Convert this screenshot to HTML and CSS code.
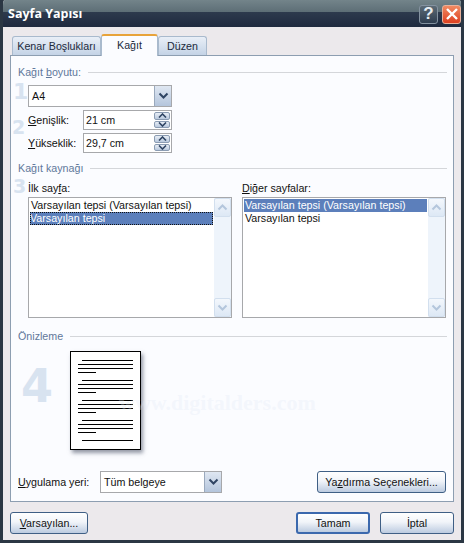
FILE: index.html
```html
<!DOCTYPE html>
<html lang="tr">
<head>
    <title>Sayfa Yapısı</title>
    <link rel="stylesheet" href="styles.css">
</head>
<body>
    <div class="window">
        <div class="titlebar">
            <span class="title">Sayfa Yapısı</span>
            <div class="title-buttons">
                <span class="help-button">?</span>
                <span class="close-button">
                    <svg width="14" height="14" viewBox="0 0 14 14"><path d="M2 2L12 12M12 2L2 12" stroke="#fff" stroke-width="2.4" fill="none"/></svg>
                </span>
            </div>
        </div>

        <div class="content">
            <div class="tabs">
                <span class="tab">Kenar Boşlukları</span>
                <span class="tab active">Kağıt</span>
                <span class="tab">Düzen</span>
            </div>

            <div class="panel">
                <span class="big-number n1">1</span>
                <span class="big-number n2">2</span>
                <span class="big-number n3">3</span>
                <span class="big-number n4">4</span>
                <span class="watermark">www.digitalders.com</span>

                <div class="group-head"><span>Kağıt <u>b</u>oyutu:</span></div>
                <div class="combo paper-combo">
                    <span class="combo-value">A4</span>
                    <span class="combo-arrow">
                        <svg width="11" height="8" viewBox="0 0 11 8"><path d="M1.5 1.5L5.5 5.5L9.5 1.5" stroke="#2f4463" stroke-width="2" fill="none"/></svg>
                    </span>
                </div>
                <div class="size-row first">
                    <label class="size-label"><u>G</u>enişlik:</label>
                    <div class="spin-input">
                        <span class="spin-value">21 cm</span>
                        <span class="spin">
                            <span class="spin-btn"><svg width="9" height="5" viewBox="0 0 9 5"><path d="M1 4.5L4.5 1L8 4.5" stroke="#2f4463" stroke-width="1.6" fill="none"/></svg></span>
                            <span class="spin-btn"><svg width="9" height="5" viewBox="0 0 9 5"><path d="M1 .5L4.5 4L8 .5" stroke="#2f4463" stroke-width="1.6" fill="none"/></svg></span>
                        </span>
                    </div>
                </div>
                <div class="size-row">
                    <label class="size-label"><u>Y</u>ükseklik:</label>
                    <div class="spin-input">
                        <span class="spin-value">29,7 cm</span>
                        <span class="spin">
                            <span class="spin-btn"><svg width="9" height="5" viewBox="0 0 9 5"><path d="M1 4.5L4.5 1L8 4.5" stroke="#2f4463" stroke-width="1.6" fill="none"/></svg></span>
                            <span class="spin-btn"><svg width="9" height="5" viewBox="0 0 9 5"><path d="M1 .5L4.5 4L8 .5" stroke="#2f4463" stroke-width="1.6" fill="none"/></svg></span>
                        </span>
                    </div>
                </div>

                <div class="group-head source-head"><span>Kağıt kaynağı</span></div>
                <div class="lists">
                    <div class="list-col">
                        <label class="list-label">İlk say<u>f</u>a:</label>
                        <div class="listbox">
                            <div class="list-items">
                                <div class="list-item">Varsayılan tepsi (Varsayılan tepsi)</div>
                                <div class="list-item selected focused">Varsayılan tepsi</div>
                            </div>
                            <div class="scrollbar">
                                <span class="scroll-btn"><svg width="11" height="7" viewBox="0 0 11 7"><path d="M1.5 5.5L5.5 1.5L9.5 5.5" stroke="#b4c6dc" stroke-width="2" fill="none"/></svg></span>
                                <span class="scroll-btn"><svg width="11" height="7" viewBox="0 0 11 7"><path d="M1.5 1.5L5.5 5.5L9.5 1.5" stroke="#b4c6dc" stroke-width="2" fill="none"/></svg></span>
                            </div>
                        </div>
                    </div>
                    <div class="list-col">
                        <label class="list-label"><u>D</u>iğer sayfalar:</label>
                        <div class="listbox">
                            <div class="list-items">
                                <div class="list-item selected">Varsayılan tepsi (Varsayılan tepsi)</div>
                                <div class="list-item">Varsayılan tepsi</div>
                            </div>
                            <div class="scrollbar">
                                <span class="scroll-btn"><svg width="11" height="7" viewBox="0 0 11 7"><path d="M1.5 5.5L5.5 1.5L9.5 5.5" stroke="#b4c6dc" stroke-width="2" fill="none"/></svg></span>
                                <span class="scroll-btn"><svg width="11" height="7" viewBox="0 0 11 7"><path d="M1.5 1.5L5.5 5.5L9.5 1.5" stroke="#b4c6dc" stroke-width="2" fill="none"/></svg></span>
                            </div>
                        </div>
                    </div>
                </div>

                <div class="group-head preview-head"><span>Önizleme</span></div>
                <div class="page">
                    <div class="para"><i class="line indent"></i><i class="line"></i><i class="line"></i><i class="line short"></i></div>
                    <div class="para"><i class="line indent"></i><i class="line"></i><i class="line"></i><i class="line short"></i></div>
                    <div class="para"><i class="line indent"></i><i class="line"></i><i class="line"></i><i class="line short"></i></div>
                    <div class="para"><i class="line indent"></i><i class="line"></i><i class="line"></i><i class="line short"></i></div>
                    <div class="para"><i class="line indent"></i></div>
                </div>

                <div class="apply-row">
                    <label class="apply-label"><u>U</u>ygulama yeri:</label>
                    <div class="combo apply-combo">
                        <span class="combo-value">Tüm belgeye</span>
                        <span class="combo-arrow">
                            <svg width="11" height="8" viewBox="0 0 11 8"><path d="M1.5 1.5L5.5 5.5L9.5 1.5" stroke="#2f4463" stroke-width="2" fill="none"/></svg>
                        </span>
                    </div>
                    <button class="btn print-btn">Ya<u>z</u>dırma Seçenekleri...</button>
                </div>
            </div>

            <div class="footer">
                <button class="btn default-btn"><u>V</u>arsayılan...</button>
                <div class="footer-right">
                    <button class="btn ok-btn primary">Tamam</button>
                    <button class="btn ok-btn">İptal</button>
                </div>
            </div>
        </div>
    </div>
</body>
</html>
```

FILE: styles.css
```css
body {
    margin: 0;
    padding: 0;
    background-color: #2b3744;
}

u {
    text-underline-offset: 1px;
}

.window {
    width: 464px;
    height: 543px;
    box-sizing: border-box;
    overflow: hidden;
    display: flex;
    flex-direction: column;
    font-family: "Liberation Sans", sans-serif;
    font-size: 10.7px;
    color: #111;
    background-color: #ece9ec;
    border-left: 3px solid #2b3744;
    border-right: 3px solid #2b3744;
    border-bottom: 3px solid #2b3744;
    border-radius: 5px 5px 0 0;
}

/* title bar */
.titlebar {
    flex: none;
    height: 27px;
    display: flex;
    align-items: center;
    justify-content: space-between;
    padding: 0 0 0 5px;
    background: linear-gradient(to bottom, #73848a 0, #5d6e76 12px, #2d3a4d 12px, #1f2a3f 27px);
}

.title {
    font-family: "Open Sans", sans-serif;
    font-size: 12.5px;
    font-weight: 700;
    color: #fff;
}

.title-buttons {
    display: flex;
    gap: 4px;
    margin-top: 1px;
}

.help-button,
.close-button {
    width: 19px;
    height: 19px;
    box-sizing: border-box;
    display: flex;
    align-items: center;
    justify-content: center;
    border-radius: 3px;
}

.help-button {
    font-family: "Liberation Sans", sans-serif;
    font-size: 17px;
    font-weight: 700;
    color: #e6edf2;
    background: linear-gradient(to bottom, #5b6a75, #2f3d4f);
    border: 1px solid #8492a0;
}

.close-button {
    background: linear-gradient(to bottom, #f08a62, #de4020);
    border: 1px solid #e8b09a;
}

/* tabs */
.content {
    flex: 1;
    min-height: 0;
    padding: 7px 7px 0 7px;
}

.tabs {
    display: flex;
    height: 21px;
    padding-left: 2px;
    align-items: flex-end;
}

.tab {
    box-sizing: border-box;
    height: 19px;
    padding-top: 3px;
    color: #1c2a3c;
    text-align: center;
    white-space: nowrap;
    border: 1px solid #a9bacd;
    border-bottom: none;
    border-radius: 3px 3px 0 0;
    background: linear-gradient(to bottom, #e9eff7, #c4d3e6);
}

.tab.active {
    height: 22px;
    width: 57px;
    position: relative;
    z-index: 1;
    margin-bottom: -1px;
    background: #fbfcff;
    border-color: #a9bacd;
    border-top: 2px solid #e8a33a;
}

.tab:nth-child(1) {
    width: 89px;
}

.tab:nth-child(3) {
    width: 49px;
}

/* main panel */
.panel {
    position: relative;
    box-sizing: border-box;
    height: 447px;
    padding: 9px 6px 0 7px;
    background-color: #fbfcff;
    border: 1px solid #8d9eb1;
}

.big-number {
    position: absolute;
    font-family: "DejaVu Sans", sans-serif;
    font-weight: 700;
    color: #d8e3f0;
    line-height: 1;
}

.n1 { left: 2px; top: 25px; font-size: 22px; }
.n2 { left: 1px; top: 62px; font-size: 19px; }
.n3 { left: 2px; top: 121px; font-size: 19px; }
.n4 { left: 10px; top: 307px; font-size: 46px; }

.watermark {
    position: absolute;
    z-index: 1;
    left: 108px;
    top: 334px;
    font-family: "Liberation Serif", serif;
    font-size: 22px;
    font-weight: 700;
    color: rgba(225, 232, 245, 0.3);
}

.group-head {
    display: flex;
    align-items: center;
    gap: 7px;
    height: 14px;
    color: #5f789b;
}

.group-head::after {
    content: "";
    flex: 1;
    height: 1px;
    background-color: #d4d6da;
}

.source-head {
    margin-top: 8px;
}

.preview-head {
    margin-top: 11px;
}

/* combos and size inputs */
.combo {
    display: flex;
    box-sizing: border-box;
    height: 22px;
    background-color: #fff;
    border: 1px solid #a7a8ab;
}

.paper-combo {
    width: 144px;
    margin: 6px 0 0 10px;
}

.combo-value {
    flex: 1;
    padding: 4px 3px 0;
}

.combo-arrow {
    width: 16px;
    display: flex;
    align-items: center;
    justify-content: center;
    background: linear-gradient(to bottom, #dfe7f2, #b4c5dc);
    border-left: 1px solid #9aa9bd;
}

.size-row {
    display: flex;
    align-items: center;
    height: 20px;
    margin: 3px 0 0 10px;
}

.size-label {
    width: 55px;
}

.spin-input {
    width: 89px;
    height: 100%;
    box-sizing: border-box;
    display: flex;
    background-color: #fff;
    border: 1px solid #a7a8ab;
}

.spin-value {
    flex: 1;
    padding: 3px 2px 0;
}

.spin {
    width: 16px;
    display: flex;
    flex-direction: column;
    gap: 1px;
    padding: 1px;
}

.spin-btn {
    flex: 1;
    display: flex;
    align-items: center;
    justify-content: center;
    background: linear-gradient(to bottom, #e8eef6, #b9c9de);
    border: 1px solid #8b9cb3;
    border-radius: 2px;
}

/* paper source lists */
.lists {
    display: flex;
    gap: 10px;
    margin: 6px 0 0 10px;
}

.list-col {
    width: 204px;
}

.list-label {
    display: block;
    height: 14px;
    line-height: 14px;
}

.listbox {
    display: flex;
    box-sizing: border-box;
    height: 121px;
    margin-top: 2px;
    background-color: #fff;
    border: 1px solid #a7a8ab;
}

.list-items {
    flex: 1;
    min-width: 0;
    padding: 1px;
}

.list-item {
    box-sizing: border-box;
    height: 13px;
    line-height: 13px;
    padding-left: 1px;
    white-space: nowrap;
}

.list-item.selected {
    color: #fff;
    background-color: #5c7fbb;
}

.list-item.focused {
    padding-left: 0;
    outline: 1px dotted #111;
    outline-offset: -1px;
}

.scrollbar {
    width: 17px;
    display: flex;
    flex-direction: column;
    justify-content: space-between;
    background-color: #eef4fb;
}

.scroll-btn {
    height: 17px;
    display: flex;
    align-items: center;
    justify-content: center;
    background: linear-gradient(to bottom, #f3f7fc, #dde8f5);
    border: 1px solid #d2dfee;
    border-radius: 2px;
}

/* preview page */
.page {
    box-sizing: border-box;
    width: 71px;
    height: 99px;
    margin: 8px 0 0 52px;
    padding: 8px 7px 0 7px;
    display: flex;
    flex-direction: column;
    gap: 7px;
    position: relative;
    background-color: #fff;
    border: 1px solid #000;
    box-shadow: 2px 3px 4px rgba(60, 70, 90, 0.55);
}

.para {
    display: flex;
    flex-direction: column;
    gap: 3px;
}

.line {
    display: block;
    height: 1px;
    background-color: #000;
}

.line.indent {
    margin-left: 4px;
}

.line.short {
    width: 18px;
}

/* bottom rows */
.apply-row {
    display: flex;
    align-items: center;
    height: 22px;
    margin-top: 21px;
}

.apply-label {
    width: 82px;
}

.apply-combo {
    width: 122px;
}

.btn {
    box-sizing: border-box;
    height: 22px;
    padding: 0;
    font-family: "Liberation Sans", sans-serif;
    font-size: 10.7px;
    color: #111;
    background: linear-gradient(to bottom, #ffffff, #f1f4f9 45%, #bccbe0);
    border: 1px solid #3f5f85;
    border-radius: 3px;
}

.print-btn {
    width: 129px;
    margin-left: auto;
    margin-right: 1px;
}

.footer {
    display: flex;
    justify-content: space-between;
    margin-top: 10px;
}

.footer-right {
    display: flex;
    gap: 10px;
}

.default-btn {
    width: 78px;
}

.ok-btn {
    width: 74px;
}

.primary {
    border: 2px solid #3b68ad;
}
```
